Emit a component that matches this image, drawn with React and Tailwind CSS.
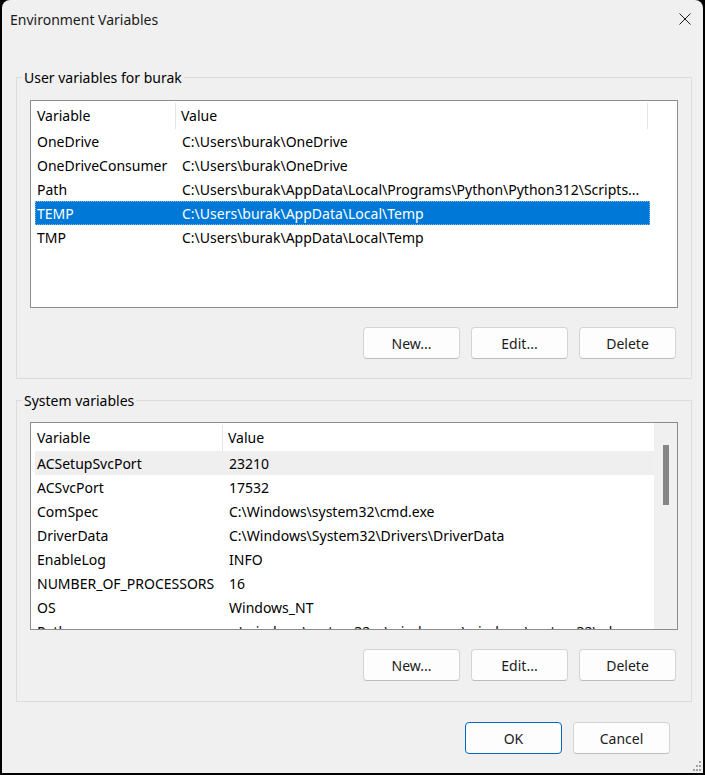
import React from 'react'

const userVars = [
  { name: 'OneDrive', value: 'C:\\Users\\burak\\OneDrive' },
  { name: 'OneDriveConsumer', value: 'C:\\Users\\burak\\OneDrive' },
  { name: 'Path', value: 'C:\\Users\\burak\\AppData\\Local\\Programs\\Python\\Python312\\Scripts...' },
  { name: 'TEMP', value: 'C:\\Users\\burak\\AppData\\Local\\Temp', selected: true },
  { name: 'TMP', value: 'C:\\Users\\burak\\AppData\\Local\\Temp' }
]

const systemVars = [
  { name: 'ACSetupSvcPort', value: '23210', hover: true },
  { name: 'ACSvcPort', value: '17532' },
  { name: 'ComSpec', value: 'C:\\Windows\\system32\\cmd.exe' },
  { name: 'DriverData', value: 'C:\\Windows\\System32\\Drivers\\DriverData' },
  { name: 'EnableLog', value: 'INFO' },
  { name: 'NUMBER_OF_PROCESSORS', value: '16' },
  { name: 'OS', value: 'Windows_NT' },
  { name: 'Path', value: 'c:\\windows\\system32;c:\\windows;c:\\windows\\system32\\wbem' }
]

const Button = ({ children, primary }) => (
  <button
    className={
      primary
        ? 'w-[97px] h-[32px] rounded-[4px] bg-[#fdfdfd] border border-[#0067c0] text-[#1b1b1b]'
        : 'w-[97px] h-[32px] rounded-[4px] bg-[#fdfdfd] border border-[#d4d4d4] border-b-[#bcbcbc] text-[#1b1b1b]'
    }
  >
    {children}
  </button>
)

const VarList = ({ rows, firstCol, scroll }) => (
  <div className="flex h-[208px] min-w-0 border border-[#8c8c8c] bg-white overflow-hidden">
    <div className="flex-1 min-w-0 flex flex-col pl-[4px] overflow-hidden">
      <div className="flex h-[28px] shrink-0">
        <div
          className={`${firstCol} shrink-0 flex items-center pl-[2px] border-r border-[#e5e5e5] mt-[2px] pb-[2px]`}
        >
          Variable
        </div>
        <div className={`flex items-center pl-[5px] mt-[2px] pb-[2px] ${scroll ? 'flex-1 min-w-0' : 'w-[472px] border-r border-[#e5e5e5]'}`}>
          Value
        </div>
      </div>
      {rows.map((row) => (
        <div
          key={row.name}
          className={
            'flex h-[24px] shrink-0 items-center whitespace-nowrap ' +
            (scroll ? '' : 'w-[615px] ') +
            (row.selected
              ? 'bg-[#0078d7] text-white outline outline-1 outline-dotted outline-offset-[-1px] outline-[#7fb8e8]'
              : row.hover
              ? 'bg-[#efefef]'
              : '')
          }
        >
          <div className={`${firstCol} shrink-0 pl-[2px] overflow-hidden`}>{row.name}</div>
          <div className="flex-1 min-w-0 pl-[6px] overflow-hidden">{row.value}</div>
        </div>
      ))}
    </div>
    {scroll && (
      <div className="w-[23px] shrink-0 bg-[#f0f0f0] flex justify-center pt-[22px] pl-[1px]">
        <div className="w-[6px] h-[60px] bg-[#868686]" />
      </div>
    )}
  </div>
)

const Group = ({ title, children, className }) => (
  <fieldset className={`min-w-0 border border-[#dcdcdc] ml-[14px] mr-[11px] ${className}`}>
    <legend className="ml-[5px] px-[2px] leading-[20px] pt-[1px]">{title}</legend>
    <div className="px-[13px] min-w-0">{children}</div>
  </fieldset>
)

const ButtonRow = () => (
  <div className="flex justify-end gap-[11px] pr-[2px] mt-[19px]">
    <Button>New...</Button>
    <Button>Edit...</Button>
    <Button>Delete</Button>
  </div>
)

export default function App() {
  return (
    <div className="w-[705px] h-[775px] bg-black pl-[2px] pr-[2px] pb-[2px] font-['Noto_Sans',sans-serif] text-[14px] text-black">
      <div className="relative h-full bg-[#f0f0f0] rounded-t-[8px] flex flex-col overflow-hidden">
        <div className="h-[38px] flex items-center justify-between pl-[8px] pr-[12px] text-[#1a1a1a]">
          <span>Environment Variables</span>
          <svg width="12" height="12" viewBox="0 0 12 12" className="mt-[-1px]">
            <path d="M0.5 0.5 L11.5 11.5 M11.5 0.5 L0.5 11.5" stroke="#1a1a1a" strokeWidth="1" />
          </svg>
        </div>

        <Group title="User variables for burak" className="mt-[29px] pb-[19px]">
          <div className="mt-[12px]">
            <VarList rows={userVars} firstCol="w-[141px]" />
          </div>
          <ButtonRow />
        </Group>

        <Group title="System variables" className="mt-[11px] pb-[20px]">
          <div className="mt-[11px]">
            <VarList rows={systemVars} firstCol="w-[188px]" scroll />
          </div>
          <ButtonRow />
        </Group>

        <div className="flex justify-end gap-[11px] mr-[33px] mt-[20px]">
          <Button primary>OK</Button>
          <Button>Cancel</Button>
        </div>

        <svg width="12" height="12" viewBox="0 0 12 12" className="absolute right-[1px] bottom-[1px]">
          <rect x="9" y="1" width="2" height="2" fill="#a0a0a0" />
          <rect x="6" y="5" width="2" height="2" fill="#a0a0a0" />
          <rect x="9" y="5" width="2" height="2" fill="#a0a0a0" />
          <rect x="3" y="9" width="2" height="2" fill="#a0a0a0" />
          <rect x="6" y="9" width="2" height="2" fill="#a0a0a0" />
          <rect x="9" y="9" width="2" height="2" fill="#a0a0a0" />
        </svg>
      </div>
    </div>
  )
}
